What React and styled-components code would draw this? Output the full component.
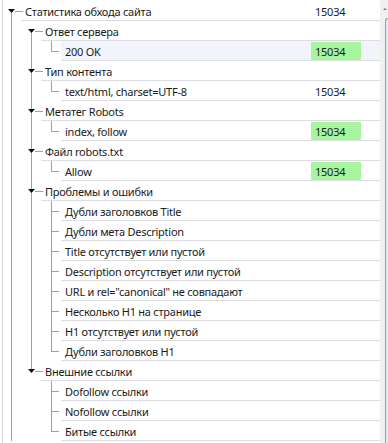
import React from 'react';
import styled, { createGlobalStyle } from 'styled-components';

const GlobalStyle = createGlobalStyle`
    html, body {
        margin: 0;
        padding: 0;
        background: #ffffff;
    }
    body {
        font-family: 'Noto Sans', 'Open Sans', sans-serif;
        font-size: 11px;
        letter-spacing: -0.25px;
        color: #1a1a1a;
    }
`;

const treeData = [
    {
        label: 'Статистика обхода сайта',
        value: '15034',
        hasNext: true,
        children: [
            { label: 'Ответ сервера', children: [{ label: '200 OK', value: '15034', good: true, selected: true }] },
            { label: 'Тип контента', children: [{ label: 'text/html, charset=UTF-8', value: '15034' }] },
            { label: 'Метатег Robots', children: [{ label: 'index, follow', value: '15034', good: true }] },
            { label: 'Файл robots.txt', children: [{ label: 'Allow', value: '15034', good: true }] },
            {
                label: 'Проблемы и ошибки',
                children: [
                    { label: 'Дубли заголовков Title' },
                    { label: 'Дубли мета Description' },
                    { label: 'Title отсутствует или пустой' },
                    { label: 'Description отсутствует или пустой' },
                    { label: 'URL и rel="canonical" не совпадают' },
                    { label: 'Несколько H1 на странице' },
                    { label: 'H1 отсутствует или пустой' },
                    { label: 'Дубли заголовков H1' },
                ],
            },
            {
                label: 'Внешние ссылки',
                children: [{ label: 'Dofollow ссылки' }, { label: 'Nofollow ссылки' }, { label: 'Битые ссылки' }],
            },
        ],
    },
];

// flattens the tree into visible rows, remembering which ancestor lines continue
const flatten = (nodes, level = 0, guides = [], out = []) => {
    nodes.forEach((node, i) => {
        const isLast = i === nodes.length - 1 && !node.hasNext;
        out.push({ ...node, level, guides, isFirst: i === 0, isLast });
        if (node.children) flatten(node.children, level + 1, [...guides, !isLast], out);
    });
    return out;
};

const LINE = '#a0a0a0';

function GuideCell({ on }) {
    return (
        <Cell>
            <svg width="20" height="20">
                {on && <line x1="8.5" y1="0" x2="8.5" y2="20" stroke={LINE} />}
            </svg>
        </Cell>
    );
}

function NodeCell({ expandable, isFirst, isLast }) {
    return (
        <Cell>
            <svg width="20" height="20">
                {expandable ? (
                    <>
                        {!isFirst && <line x1="8.5" y1="0" x2="8.5" y2="8" stroke={LINE} />}
                        {!isLast && <line x1="8.5" y1="10" x2="8.5" y2="20" stroke={LINE} />}
                        <line x1="12" y1="10.5" x2="20" y2="10.5" stroke={LINE} />
                        <polygon points="5,8 12,8 8.5,12" fill="#111" />
                    </>
                ) : (
                    <>
                        <line x1="8.5" y1="0" x2="8.5" y2={isLast ? 11 : 20} stroke={LINE} />
                        <line x1="8.5" y1="10.5" x2="16" y2="10.5" stroke={LINE} />
                    </>
                )}
            </svg>
        </Cell>
    );
}

export default function App() {
    const rows = flatten(treeData);

    return (
        <>
            <GlobalStyle />
            <Frame>
                <Tree>
                    {rows.map((row, idx) => (
                        <Row key={idx}>
                            {row.guides.map((on, g) => (
                                <GuideCell key={g} on={on} />
                            ))}
                            <NodeCell expandable={!!row.children} isFirst={row.isFirst} isLast={row.isLast} />
                            <Main selected={row.selected}>
                                <Label>{row.label}</Label>
                                <Value good={row.good}>{row.value}</Value>
                            </Main>
                        </Row>
                    ))}
                </Tree>
                <ScrollBar>
                    <ArrowUp />
                    <Thumb />
                </ScrollBar>
            </Frame>
        </>
    );
}

const Frame = styled.div`
    width: 386px;
    height: 443px;
    margin-left: 2px;
    border-left: 1px solid #d4d4dc;
    display: flex;
    overflow: hidden;
    box-sizing: border-box;
`;

const Tree = styled.div`
    flex: 1;
    padding-top: 1px;
    display: flex;
    flex-direction: column;
`;

const Row = styled.div`
    display: flex;
    height: 20px;
`;

const Cell = styled.div`
    width: 20px;
    height: 20px;
    flex: none;

    & svg {
        display: block;
    }
`;

const Main = styled.div`
    flex: 1;
    display: flex;
    align-items: center;
    margin-left: -2px;
    padding-left: 4px;
    padding-top: 1px;
    box-sizing: border-box;
    border-bottom: 1px solid #dcdce2;
    background: ${(props) => (props.selected ? '#f1f5fb' : 'transparent')};
    position: relative;
    z-index: 1;
    white-space: nowrap;
`;

const Label = styled.span`
    flex: 1;
`;

const Value = styled.span`
    width: 50px;
    height: 100%;
    margin-right: 19px;
    padding-left: 4px;
    box-sizing: border-box;
    display: flex;
    align-items: center;
    background: ${(props) => (props.good ? '#a8f5a0' : 'transparent')};
`;

const ScrollBar = styled.div`
    width: 8px;
    flex: none;
    background: #f0f0f0;
    position: relative;
`;

const ArrowUp = styled.div`
    margin: 8px 0 0 3px;
    width: 0;
    height: 0;
    border-left: 2px solid transparent;
    border-right: 2px solid transparent;
    border-bottom: 2px solid #7a7a7a;
`;

const Thumb = styled.div`
    margin: 8px 0 0 5px;
    height: 440px;
    border: 1px solid #9a9aa8;
    border-right: none;
    border-radius: 3px 0 0 0;
    background: #e2e8f8;
`;
